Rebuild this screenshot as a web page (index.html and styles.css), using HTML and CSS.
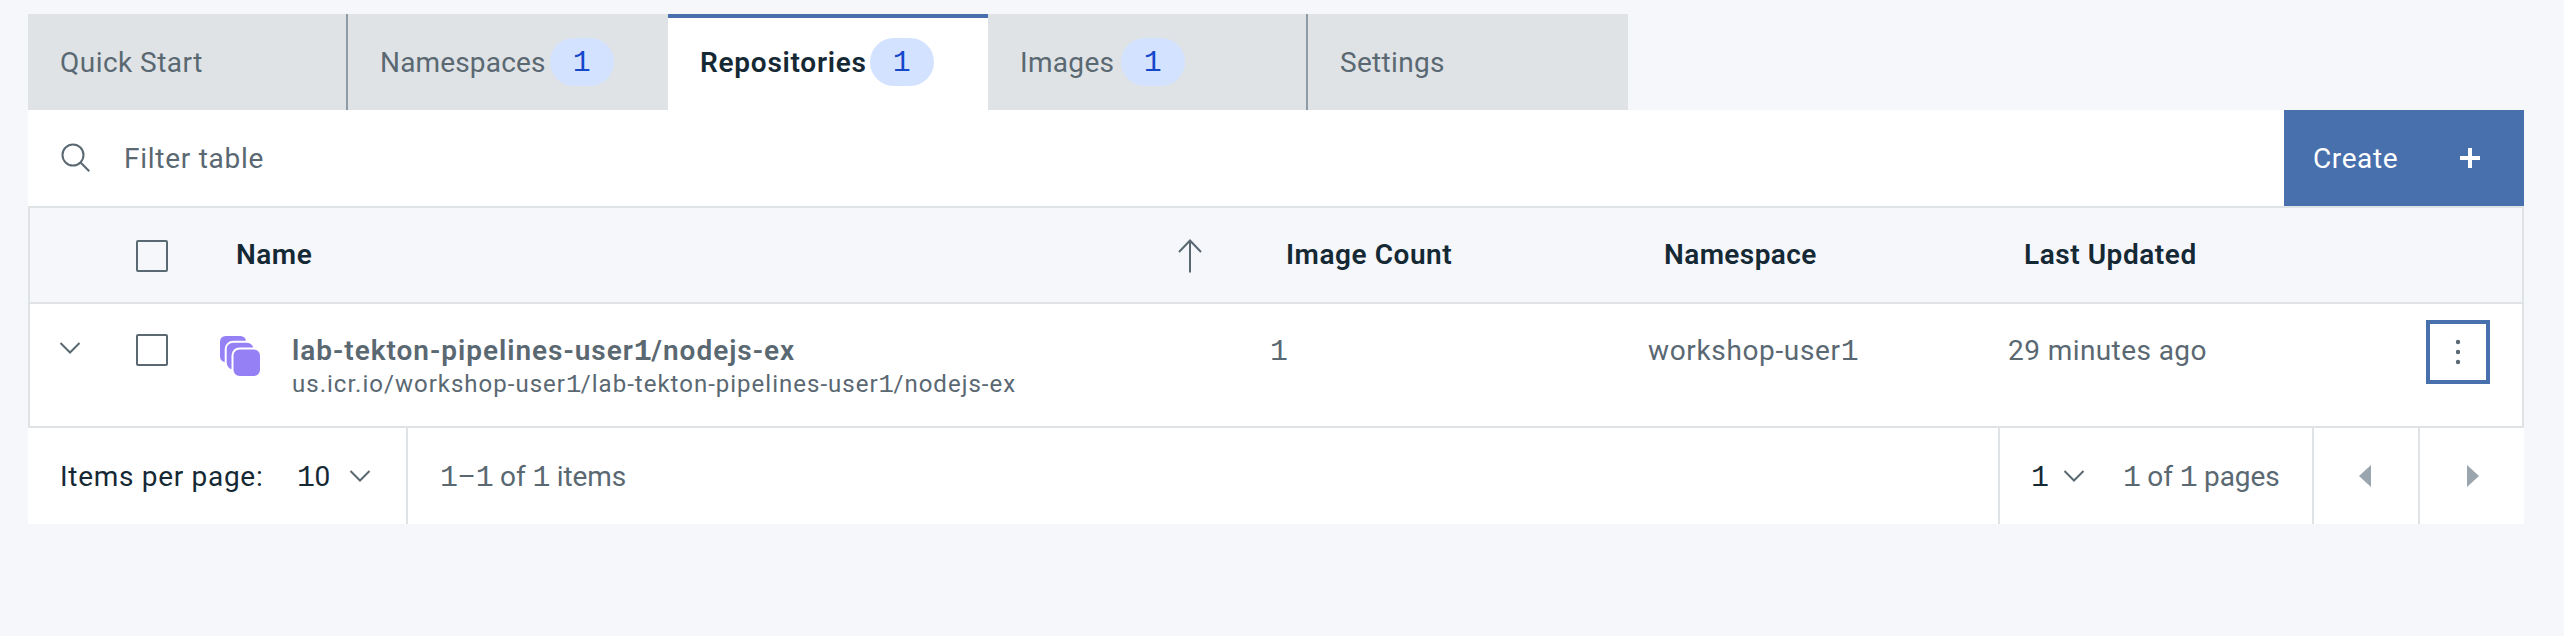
FILE: index.html
```html
<!DOCTYPE html>
<html lang="en">
<head>
<meta charset="utf-8">
<title>Repositories</title>
<link rel="stylesheet" href="styles.css">
</head>
<body>
<main class="page">
  <nav class="tabs">
    <a class="tab"><span class="t-quick">Quick Start</span></a>
    <a class="tab divided"><span class="t-namespaces">Namespaces</span><span class="badge"><span class="one">1</span></span></a>
    <a class="tab active"><span class="t-repos">Repositories</span><span class="badge"><span class="one">1</span></span></a>
    <a class="tab"><span class="t-images">Images</span><span class="badge"><span class="one">1</span></span></a>
    <a class="tab divided"><span class="t-settings">Settings</span></a>
  </nav>
  <section class="toolbar">
    <svg class="search" width="32" height="32" viewBox="0 0 32 32" fill="none" stroke="#5a6872" stroke-width="2"><circle cx="13" cy="13" r="10.5"/><path d="M20.5 20.5 29.3 29.3"/></svg>
    <span class="filter">Filter table</span>
    <button class="create"><span class="t-create">Create</span><svg width="20" height="20" viewBox="0 0 20 20"><path fill="#fff" d="M8 0h4v8h8v4h-8v8H8v-8H0V8h8z"/></svg></button>
  </section>
  <section class="table">
    <div class="row head">
      <div></div>
      <div><span class="check"></span></div>
      <div class="name-head"><span class="t-name">Name</span><svg class="sort" width="24" height="34" viewBox="0 0 24 34" fill="none" stroke="#5a6872" stroke-width="2"><path d="M12 33.500V1.500M1 13 12 1.500 23 13"/></svg></div>
      <div class="col-head t-count">Image Count</div>
      <div class="col-head t-ns">Namespace</div>
      <div class="col-head t-updated">Last Updated</div>
      <div></div>
    </div>
    <div class="row body">
      <div class="expand"><svg width="22" height="12" viewBox="0 0 22 12" fill="none" stroke="#5a6872" stroke-width="2"><path d="M1.500 1 11 10.500 20.500 1"/></svg></div>
      <div class="check-cell"><span class="check"></span></div>
      <div class="name-cell">
        <svg class="stack" width="42" height="42" viewBox="0 0 42 42" fill="#9680f6" stroke="#fff" stroke-width="2"><rect x="-1" y="-1" width="28" height="28" rx="6.500"/><rect x="5.700" y="5.700" width="28.600" height="28.600" rx="7.500"/><rect x="12.500" y="12.500" width="28.500" height="28.500" rx="7"/></svg>
        <div class="names">
          <div class="title">lab-tekton-pipelines-user<span class="one">1</span>/nodejs-ex</div>
          <div class="sub">us.icr.io/workshop-user<span class="one">1</span>/lab-tekton-pipelines-user<span class="one">1</span>/nodejs-ex</div>
        </div>
      </div>
      <div class="cell"><span class="one">1</span></div>
      <div class="cell t-user">workshop-user<span class="one">1</span></div>
      <div class="cell t-ago">29 minutes ago</div>
      <div class="menu-cell"><button class="menu"><svg width="8" height="28" viewBox="0 0 8 28" fill="#5a6872"><circle cx="4" cy="4" r="2.200"/><circle cx="4" cy="14" r="2.200"/><circle cx="4" cy="24" r="2.200"/></svg></button></div>
    </div>
  </section>
  <footer class="pagination">
    <div class="per-page"><span class="t-items">Items per page:</span><span class="size"><span class="one">1</span>0</span><svg width="22" height="12" viewBox="0 0 22 12" fill="none" stroke="#5a6872" stroke-width="2"><path d="M1.500 1 11 10.500 20.500 1"/></svg></div>
    <div class="range"><span><span class="one">1</span>–<span class="one">1</span> of <span class="one">1</span> items</span></div>
    <div class="page-select"><span class="current"><span class="one">1</span></span><svg width="22" height="12" viewBox="0 0 22 12" fill="none" stroke="#5a6872" stroke-width="2"><path d="M1.500 1 11 10.500 20.500 1"/></svg><span class="t-pages"><span class="one">1</span> of <span class="one">1</span> pages</span></div>
    <button class="step prev"><svg width="12" height="22" viewBox="0 0 12 22"><path fill="#9aa5ad" d="M12 0v22L0 11z"/></svg></button>
    <button class="step next"><svg width="12" height="22" viewBox="0 0 12 22"><path fill="#9aa5ad" d="M0 0v22l12-11z"/></svg></button>
  </footer>
</main>
</body>
</html>
```
FILE: styles.css
```css
* { box-sizing: border-box; }
body {
  margin: 0;
  background: #f5f7fb;
  color: #5a6872;
  font: 28px/36px Roboto, "Liberation Sans", sans-serif;
  letter-spacing: .32px;
  white-space: nowrap;
}
button { font: inherit; letter-spacing: inherit; border: 0; margin: 0; padding: 0; background: none; color: inherit; }
svg { display: block; flex: none; }
.page { width: 2496px; margin: 14px 0 0 28px; }
.one { font-family: "Liberation Mono", monospace; font-size: 1.07em; line-height: 0; letter-spacing: -.5px; }

.tabs { display: flex; height: 96px; }
.tab { display: flex; align-items: center; width: 320px; padding: 1px 0 0 32px; background: #dfe3e6; }
.tab > span:first-child { flex: none; }
.divided { box-shadow: -2px 0 0 #8c9ba5; }
.active { background: #fff; color: #152935; font-weight: 600; box-shadow: inset 0 4px 0 #4870ad; }
.badge { display: flex; align-items: center; justify-content: center; width: 64px; height: 48px; margin: -1px 0 0 5px; padding: 2px 1px 0 0; border-radius: 24px; background: #d2e2ff; color: #1546cc; font-weight: 400; }
.t-quick { letter-spacing: .47px; }
.t-namespaces { width: 165px; letter-spacing: .16px; }
.t-repos { width: 165px; letter-spacing: .74px; }
.t-images { width: 96px; }

.toolbar { display: flex; align-items: center; height: 96px; padding-left: 32px; background: #fff; }
.filter { margin-left: 32px; padding-top: 1px; letter-spacing: .73px; }
.create { display: flex; align-items: center; justify-content: space-between; width: 240px; height: 96px; margin-left: auto; padding: 0 44px 0 29px; background: #4870ad; color: #fff; }
.t-create { padding-top: 1px; letter-spacing: .6px; }

.table { border: 2px solid #dfe3e6; background: #fff; }
.row { display: grid; grid-template-columns: 106px 84px 1034px 378px 360px 418px 1fr; }
.head { height: 96px; padding-top: 2px; align-items: center; background: #f5f7fb; border-bottom: 2px solid #dfe3e6; color: #152935; font-weight: 600; }
.check { display: block; width: 32px; height: 32px; border: 2px solid #5a6872; border-radius: 2px; }
.name-head { display: flex; justify-content: space-between; align-items: center; padding: 0 52px 0 16px; }
.t-name { margin-top: -3px; letter-spacing: .5px; }
.col-head { padding: 0 0 3px 32px; }
.t-count, .t-updated { letter-spacing: .55px; }
.t-ns { letter-spacing: .4px; }
.body { height: 122px; align-items: start; }
.expand { padding: 38px 0 0 29px; }
.check-cell { padding-top: 30px; }
.name-cell { display: flex; padding-top: 28px; }
.stack { margin-top: 4px; }
.names { margin: 1px 0 0 30px; }
.title { font-weight: 600; letter-spacing: .98px; }
.title .one { font-weight: 700; }
.sub { margin-top: -1px; font-size: 24px; line-height: 32px; letter-spacing: 1.01px; }
.cell { padding: 29px 0 0 16px; }
.t-user { letter-spacing: .65px; }
.t-ago { letter-spacing: .42px; }
.menu-cell { padding: 16px 32px 0 0; display: flex; justify-content: flex-end; }
.menu { display: flex; align-items: center; justify-content: center; width: 64px; height: 64px; border: 4px solid #4870ad; }

.pagination { display: flex; height: 96px; background: #fff; }
.pagination > * { display: flex; align-items: center; }
.pagination span { padding-top: 1px; }
.per-page { width: 380px; padding-left: 32px; border-right: 2px solid #dfe3e6; color: #152935; }
.t-items { width: 237px; letter-spacing: .7px; }
.size { width: 52px; }
.range { padding-left: 32px; letter-spacing: -.1px; }
.page-select { width: 316px; margin-left: auto; padding-left: 31px; border: solid #dfe3e6; border-width: 0 2px; }
.current { width: 32px; color: #152935; }
.t-pages { margin-left: 38px; letter-spacing: -.1px; }
.step { justify-content: center; width: 104px; padding-left: 1px; }
.prev { width: 106px; padding: 0 2px 0 0; border-right: 2px solid #dfe3e6; }
```
